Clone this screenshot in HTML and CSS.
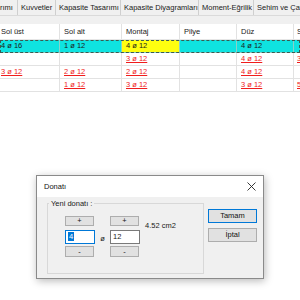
FILE: index.html
```html
<!DOCTYPE html>
<html>
<head>
<meta charset="utf-8">
<link rel="stylesheet" href="styles.css">
</head>
<body>
<div class="tabs">
  <div class="tab t1">rımı</div>
  <div class="tab t2">Kuvvetler</div>
  <div class="tab t3">Kapasite Tasarımı</div>
  <div class="tab t4">Kapasite Diyagramları</div>
  <div class="tab t5">Moment-Eğrilik</div>
  <div class="tab t6">Sehim ve Çatlak</div>
</div>
<div class="strip"></div>
<div class="grid">
  <div class="row head">
    <div class="c first">Sol üst</div><div class="c">Sol alt</div><div class="c">Montaj</div><div class="c">Pilye</div><div class="c">Düz</div><div class="c last">S</div>
  </div>
  <div class="row sel">
    <div class="c first">4 ø 16</div><div class="c">1 ø 12</div><div class="c yel">4 ø 12</div><div class="c"></div><div class="c">4 ø 12</div><div class="c last"></div>
  </div>
  <div class="row">
    <div class="c first"></div><div class="c"></div><div class="c red">3 ø 12</div><div class="c"></div><div class="c red">4 ø 12</div><div class="c last red">3</div>
  </div>
  <div class="row">
    <div class="c first red">3 ø 12</div><div class="c red">2 ø 12</div><div class="c red">2 ø 12</div><div class="c"></div><div class="c red">4 ø 12</div><div class="c last"></div>
  </div>
  <div class="row">
    <div class="c first"></div><div class="c red">1 ø 12</div><div class="c red">3 ø 12</div><div class="c"></div><div class="c red">3 ø 12</div><div class="c last red">5</div>
  </div>
</div>

<div class="dialog">
  <div class="titlebar">
    <span class="title">Donatı</span>
    <svg class="close" width="9" height="9" viewBox="0 0 9 9"><path d="M0.5 0.5 L8.5 8.5 M8.5 0.5 L0.5 8.5" stroke="#222" stroke-width="0.9" fill="none"/></svg>
  </div>
  <div class="dbody">
    <fieldset class="group">
      <legend>Yeni donatı :</legend>
      <div class="gin">
        <div class="spin">
          <div class="btn small plus">+</div>
          <div class="textbox focus"><span class="selt">4</span></div>
          <div class="btn small">-</div>
        </div>
        <div class="phi">ø</div>
        <div class="spin">
          <div class="btn small plus">+</div>
          <div class="textbox">12</div>
          <div class="btn small">-</div>
        </div>
        <div class="area">4.52 cm2</div>
      </div>
    </fieldset>
    <div class="actions">
      <div class="btn big def">Tamam</div>
      <div class="btn big">İptal</div>
    </div>
  </div>
</div>
</body>
</html>
```
FILE: styles.css
```css
html, body {
  margin: 0;
  padding: 0;
}
body {
  width: 300px;
  height: 300px;
  overflow: hidden;
  background: #ffffff;
  font-family: "Liberation Sans", Arial, sans-serif;
  font-size: 7.5px;
  color: #1a1a1a;
  position: relative;
}
.tabs {
  display: flex;
  height: 16px;
  background: #f0f0f0;
  border-bottom: 1px solid #dadada;
  box-sizing: border-box;
  white-space: nowrap;
  overflow: hidden;
}
.tab {
  flex: none;
  height: 15px;
  line-height: 15px;
  padding-left: 2px;
  box-sizing: border-box;
  border-right: 1px solid #cfcfcf;
  margin-right: 1px;
  overflow: hidden;
}
.t1 { width: 18px; padding-left: 0; }
.t2 { width: 37px; }
.t3 { width: 64px; }
.t4 { width: 77px; }
.t5 { width: 54px; }
.t6 { width: 48px; border-right: none; }
.strip {
  height: 8px;
  background: #f0f0f0;
}
.grid {
  display: flex;
  flex-direction: column;
}
.row {
  display: grid;
  grid-template-columns: 60px 62px 58px 57px 57px 6px;
  height: 13px;
}
.row.head {
  height: 16px;
}
.c {
  border-right: 1px solid #e2e2e2;
  border-bottom: 1px solid #e2e2e2;
  padding-left: 4px;
  line-height: 12px;
  white-space: nowrap;
  overflow: hidden;
}
.head .c {
  line-height: 15px;
  border-bottom-color: #e6e6e6;
}
.c.first { padding-left: 1px; }
.c.last { border-right: none; padding-left: 3px; }
.sel {
  background: #0fe3e0;
  outline: 1px dashed #3c5a50;
  outline-offset: -1px;
  position: relative;
}
.sel .c { border-color: #8ad0c8; }
.c.yel { background: #ffff10; }
.c.red {
  color: #f01c1c;
  text-decoration: underline;
}

.dialog {
  position: absolute;
  left: 36px;
  top: 175px;
  width: 228px;
  height: 104px;
  box-sizing: border-box;
  border: 1px solid #8a8a8a;
  background: #f0f0f0;
  box-shadow: 1px 2px 8px rgba(0,0,0,0.28);
  display: flex;
  flex-direction: column;
}
.titlebar {
  height: 21px;
  background: #ffffff;
  display: flex;
  align-items: center;
  padding: 0 7px 0 7px;
  flex: none;
}
.title {
  flex: 1;
  font-size: 7.5px;
  color: #111;
}
.close { display: block; }
.dbody {
  flex: 1;
  display: flex;
  padding: 2px 6px 0 10px;
  gap: 4px;
}
.group {
  margin: 0;
  padding: 0;
  width: 157px;
  height: 75px;
  box-sizing: border-box;
  border: 1px solid #d8d8d8;
}
.group legend {
  margin-left: 1px;
  padding: 0 2px;
  font-size: 7.5px;
  line-height: 9px;
}
.gin {
  display: flex;
  align-items: flex-start;
  padding: 8px 0 0 17px;
}
.spin {
  display: flex;
  flex-direction: column;
  width: 30px;
  gap: 2px;
}
.btn {
  background: #e1e1e1;
  border: 1px solid #adadad;
  box-sizing: border-box;
  text-align: center;
  color: #111;
}
.btn.small {
  width: 29px;
  height: 11px;
  line-height: 9px;
  font-size: 7.5px;
}
.btn.small.plus {
  height: 10px;
  line-height: 8px;
  margin-bottom: 2px;
}
.textbox {
  height: 14px;
  width: 30px;
  box-sizing: border-box;
  border: 1px solid #7a7a7a;
  background: #fff;
  line-height: 12px;
  padding-left: 2px;
}
.textbox.focus { border-color: #0078d7; }
.selt {
  background: #0078d7;
  color: #fff;
  padding: 0 1px;
}
.phi {
  width: 15px;
  text-align: center;
  margin-top: 18px;
  line-height: 9px;
}
.area {
  margin-left: 5px;
  margin-top: 5px;
  line-height: 9px;
}
.actions {
  display: flex;
  flex-direction: column;
  gap: 5px;
  padding-top: 10px;
}
.btn.big {
  width: 49px;
  height: 14px;
  line-height: 12px;
  font-size: 7.5px;
}
.btn.def {
  border: 1px solid #0078d7;
  box-shadow: inset 0 0 0 1px #e1e1e1;
}
```
